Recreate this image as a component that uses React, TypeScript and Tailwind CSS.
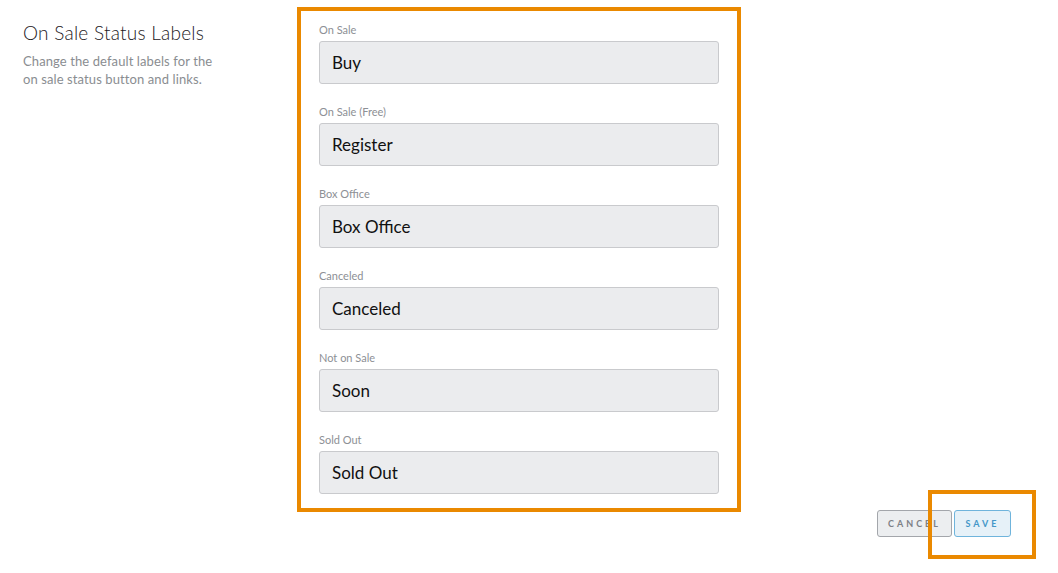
const fields = [
  { label: 'On Sale', value: 'Buy' },
  { label: 'On Sale (Free)', value: 'Register' },
  { label: 'Box Office', value: 'Box Office' },
  { label: 'Canceled', value: 'Canceled' },
  { label: 'Not on Sale', value: 'Soon' },
  { label: 'Sold Out', value: 'Sold Out' },
];

export default function App() {
  return (
    <div className="relative w-[1058px] h-[573px] bg-white font-['Lato',sans-serif] overflow-hidden">
      <div className="flex">
        {/* Section intro */}
        <div className="w-[297px] pl-[23px] pt-[21px]">
          <h2 className="text-[19px] leading-6 font-light tracking-[0.25px] text-[#1d2024]">On Sale Status Labels</h2>
          <p className="mt-[7px] text-[13px] leading-[18px] tracking-[0.1px] text-[#8a8d91] w-[200px]">
            Change the default labels for the on sale status button and links.
          </p>
        </div>

        {/* Form */}
        <div className="mt-[7px] w-[444px] border-4 border-[#ea8900] px-[18px] pt-[11px] pb-[14px] flex flex-col gap-5">
          {fields.map((f) => (
            <div key={f.label} className="flex flex-col gap-[3px]">
              <label className="text-[11px] leading-4 text-[#8d9095]">{f.label}</label>
              <div className="h-[43px] flex items-center px-[12px] bg-[#ebecee] border border-[#c9cacd] rounded-[3px] text-[17px] text-[#111]">
                {f.value}
              </div>
            </div>
          ))}
        </div>
      </div>

      {/* Actions */}
      <div className="flex justify-end gap-[2px] pr-[47px] mt-[-2px]">
        <button className="w-[75px] h-[27px] rounded-[3px] border border-[#a3a6ab] bg-[#eceef0] text-[9px] font-bold tracking-[3px] text-[#7c8086]">
          CANCEL
        </button>
        <button className="w-[57px] h-[27px] rounded-[3px] border border-[#6fb4dc] bg-[#e6f1f8] text-[9px] font-bold tracking-[3px] text-[#4497c8]">
          SAVE
        </button>
      </div>

      {/* Highlight annotation */}
      <div className="absolute left-[928px] top-[490px] w-[108px] h-[69px] border-4 border-[#ea8900]" />
    </div>
  );
}
